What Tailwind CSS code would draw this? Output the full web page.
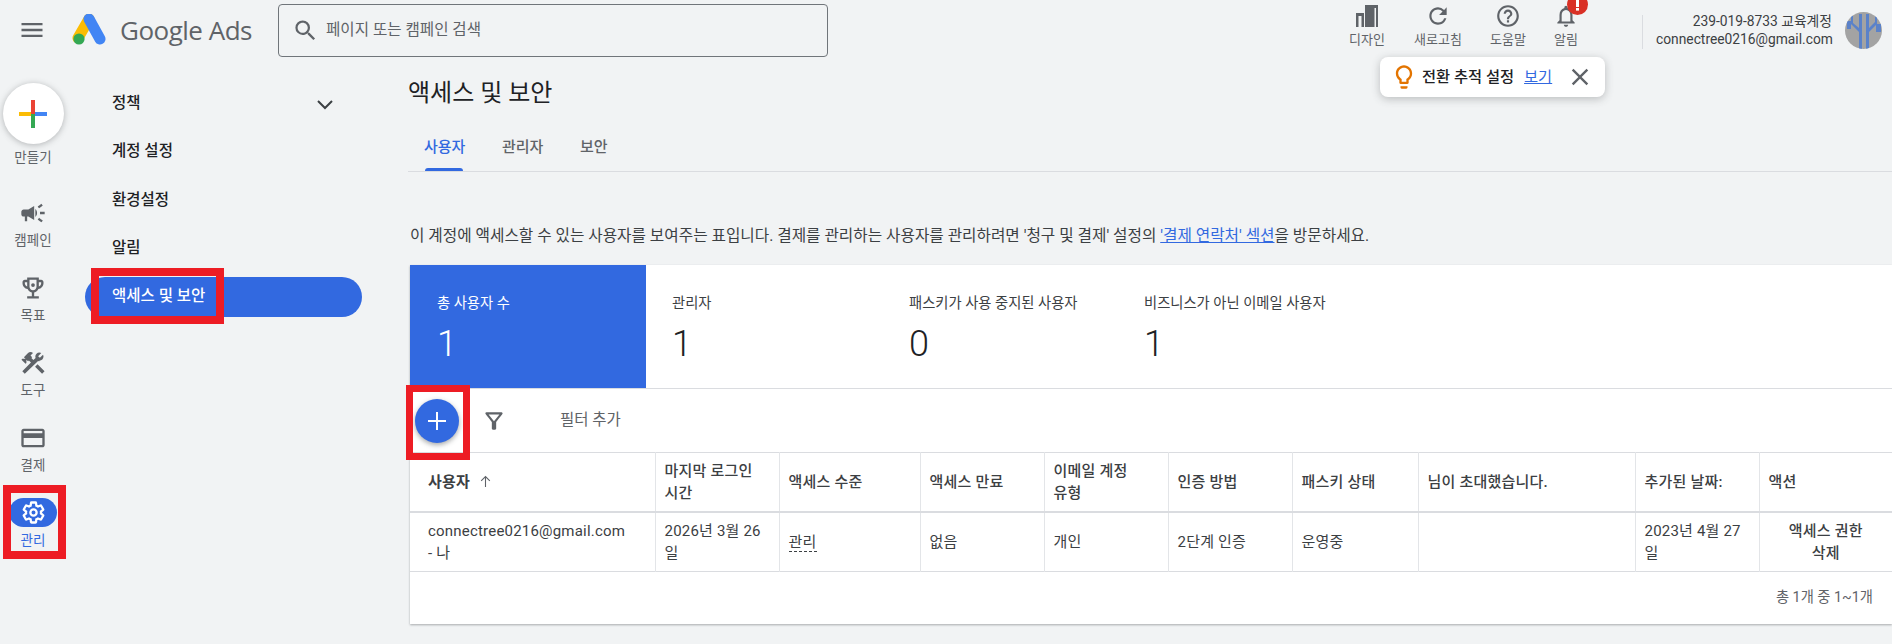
<!DOCTYPE html>
<html lang="ko">
<head>
    <meta charset="UTF-8">
    <title>액세스 및 보안 - Google Ads</title>
    <script src="https://cdn.jsdelivr.net/npm/@tailwindcss/browser@4"></script>
</head>
<body class="relative w-[1892px] h-[644px] overflow-hidden bg-[#f1f3f4] text-[#3c4043] font-['Roboto','Noto_Sans_CJK_KR',sans-serif]">

    <!-- 상단 바 -->
    <header class="flex items-start h-[60px]">
        <button class="w-[64px] h-[60px] flex items-center justify-center">
            <svg class="w-7 h-7 fill-[#5f6368]" viewBox="0 0 24 24"><path d="M3 18h18v-2H3v2zm0-5h18v-2H3v2zm0-7v2h18V6H3z"/></svg>
        </button>
        <svg class="w-[36px] h-[32px] mt-[14px] ml-[8px]" viewBox="0 0 36 32">
            <path d="M17 5 6 24" stroke="#fbbc04" stroke-width="11" stroke-linecap="round"/>
            <path d="M17 5 28 25" stroke="#4285f4" stroke-width="11" stroke-linecap="round"/>
            <circle cx="7" cy="25" r="5.6" fill="#34a853"/>
        </svg>
        <span class="ml-[12px] mt-[12px] w-[130px] whitespace-nowrap text-[26px] leading-[36px] text-[#5f6368] font-['Open_Sans',sans-serif] tracking-[-0.5px]">Google Ads</span>
        <div class="ml-[28px] mt-[4px] w-[550px] h-[53px] flex items-center border border-[#70757a] rounded-[4px] pl-[13px]">
            <svg class="w-[27px] h-[27px] fill-[#5f6368]" viewBox="0 0 24 24"><path d="M15.5 14h-.79l-.28-.27A6.471 6.471 0 0 0 16 9.5 6.5 6.5 0 1 0 9.5 16c1.61 0 3.09-.59 4.23-1.57l.27.28v.79l5 4.99L20.49 19l-4.99-5zm-6 0C7.01 14 5 11.99 5 9.5S7.01 5 9.5 5 14 7.01 14 9.5 11.99 14 9.5 14z"/></svg>
            <span class="ml-[7px] text-[15.6px] text-[#5f6368]">페이지 또는 캠페인 검색</span>
        </div>

        <div class="flex ml-auto text-[13px] text-[#5f6368]">
            <div class="w-[70px] flex flex-col items-center pt-[3px]">
                <svg class="w-[26px] h-[26px]" viewBox="0 0 26 26"><path d="M2 10h8v14H2zM11 2h13v22H11z" fill="#5f6368"/><path d="M4.5 13H7.5v11H4.5zM20.5 5H22v19h-1.5z" fill="#f1f3f4"/></svg>
                <span class="mt-[2px] leading-[18px]">디자인</span>
            </div>
            <div class="w-[72px] flex flex-col items-center pt-[3px]">
                <svg class="w-[26px] h-[26px] fill-[#5f6368]" viewBox="0 0 24 24"><path d="M17.65 6.35A7.958 7.958 0 0 0 12 4c-4.42 0-7.99 3.58-7.99 8s3.57 8 7.99 8c3.73 0 6.84-2.55 7.73-6h-2.08A5.99 5.99 0 0 1 12 18c-3.31 0-6-2.69-6-6s2.69-6 6-6c1.66 0 3.14.69 4.22 1.78L13 11h7V4l-2.35 2.35z"/></svg>
                <span class="mt-[2px] leading-[18px]">새로고침</span>
            </div>
            <div class="w-[68px] flex flex-col items-center pt-[3px]">
                <svg class="w-[26px] h-[26px] fill-[#5f6368]" viewBox="0 0 24 24"><path d="M11 18h2v-2h-2v2zm1-16C6.48 2 2 6.48 2 12s4.48 10 10 10 10-4.48 10-10S17.52 2 12 2zm0 18c-4.41 0-8-3.59-8-8s3.59-8 8-8 8 3.59 8 8-3.59 8-8 8zm0-14c-2.21 0-4 1.79-4 4h2c0-1.1.9-2 2-2s2 .9 2 2c0 2-3 1.75-3 5h2c0-2.25 3-2.5 3-5 0-2.21-1.79-4-4-4z"/></svg>
                <span class="mt-[2px] leading-[18px]">도움말</span>
            </div>
            <div class="relative w-[48px] flex flex-col items-center pt-[3px]">
                <svg class="w-[26px] h-[26px] fill-[#5f6368]" viewBox="0 0 24 24"><path d="M12 22c1.1 0 2-.9 2-2h-4c0 1.1.9 2 2 2zm6-6v-5c0-3.07-1.63-5.64-4.5-6.32V4c0-.83-.67-1.5-1.5-1.5s-1.5.67-1.5 1.5v.68C7.64 5.36 6 7.92 6 11v5l-2 2v1h16v-1l-2-2zm-2 1H8v-6c0-2.48 1.51-4.5 4-4.5s4 2.02 4 4.5v6z"/></svg>
                <span class="mt-[2px] leading-[18px]">알림</span>
                <svg class="absolute left-[25px] top-[-6px] w-[21px] h-[21px]" viewBox="0 0 21 21"><circle cx="10.5" cy="10.5" r="10.5" fill="#d93025"/><rect x="9" y="6" width="3" height="7" fill="#fff"/><rect x="9" y="14" width="3" height="2.6" fill="#fff"/></svg>
            </div>
        </div>
        <div class="ml-[52px] mt-[15px] w-px h-[34px] bg-[#dadce0]"></div>
        <div class="ml-[13px] mt-[12px] w-[176px] whitespace-nowrap text-[13.8px] leading-[18px] text-right text-[#3c4043]">
            <div>239-019-8733 교육계정</div>
            <div>connectree0216@gmail.com</div>
        </div>
        <svg class="ml-[13px] mr-[10px] mt-[12px] w-[37px] h-[37px]" viewBox="0 0 37 37">
            <clipPath id="av"><circle cx="18.5" cy="18.5" r="18.5"/></clipPath>
            <g clip-path="url(#av)">
                <rect width="37" height="37" fill="#a3a3a3"/>
                <path d="M14 37V20L6 12V4h2v7l6 5V2h3v37h4V2h3v14l6-6V3h2v9l-8 8v17z" fill="#5b82c9"/>
                <path d="M2 9h4v8H2zM31 12h5v8h-5z" fill="#5b82c9"/>
            </g>
        </svg>
    </header>

    <div class="flex h-[584px]">
        <!-- 왼쪽 레일 -->
        <nav class="w-[66px] shrink-0 flex flex-col items-center text-[13.5px] leading-[18px] text-[#5f6368]">
            <div class="mt-[23px] w-[61px] h-[61px] rounded-full bg-white shadow-[0_1px_6px_rgba(60,64,67,0.35)] flex items-center justify-center">
                <svg class="w-[28px] h-[28px]" viewBox="0 0 28 28">
                    <rect x="0" y="12" width="14" height="4" fill="#fbbc04"/>
                    <rect x="14" y="12" width="14" height="4" fill="#4285f4"/>
                    <rect x="12" y="14" width="4" height="14" fill="#34a853"/>
                    <rect x="12" y="0" width="4" height="14" fill="#ea4335"/>
                </svg>
            </div>
            <span class="mt-[4px] mb-[33px]">만들기</span>
            <div class="h-[75px] flex flex-col items-center gap-[4px]">
                <svg class="w-[28px] h-[28px] fill-[#5f6368]" viewBox="0 0 24 24"><path d="M18 11v2h4v-2h-4zm-2 6.61c.96.71 2.21 1.65 3.2 2.39.4-.53.8-1.07 1.2-1.6-.99-.74-2.24-1.68-3.2-2.4-.4.54-.8 1.08-1.2 1.61zM20.4 5.6c-.4-.53-.8-1.07-1.2-1.6-.99.74-2.24 1.68-3.2 2.4.4.53.8 1.07 1.2 1.6.96-.72 2.21-1.65 3.2-2.4zM4 9c-1.1 0-2 .9-2 2v2c0 1.1.9 2 2 2h1v4h2v-4h1l5 3V6L8 9H4zm11.5 3c0-1.33-.58-2.53-1.5-3.35v6.69c.92-.81 1.5-2.01 1.5-3.34z"/></svg>
                <span>캠페인</span>
            </div>
            <div class="h-[75px] flex flex-col items-center gap-[4px]">
                <svg class="w-[28px] h-[28px] fill-[#5f6368]" viewBox="0 0 24 24"><path d="M19 5h-2V3H7v2H5c-1.1 0-2 .9-2 2v1c0 2.55 1.92 4.63 4.39 4.94.63 1.5 1.98 2.63 3.61 2.96V19H7v2h10v-2h-4v-3.1c1.63-.33 2.98-1.46 3.61-2.96C19.08 12.63 21 10.55 21 8V7c0-1.1-.9-2-2-2zM5 8V7h2v3.82C5.84 10.4 5 9.3 5 8zm7 6c-1.65 0-3-1.35-3-3V5h6v6c0 1.65-1.35 3-3 3zm7-6c0 1.3-.84 2.4-2 2.82V7h2v1z"/><circle cx="12" cy="9.5" r="1.6"/></svg>
                <span>목표</span>
            </div>
            <div class="h-[75px] flex flex-col items-center gap-[4px]">
                <svg class="w-[28px] h-[28px] fill-[#5f6368]" viewBox="0 0 24 24"><path d="M13.78 15.3l6 6 2.11-2.16-6-6zM17.5 10c1.93 0 3.5-1.57 3.5-3.5 0-.58-.16-1.12-.41-1.6l-2.7 2.7-1.49-1.49 2.7-2.7c-.48-.25-1.02-.41-1.6-.41C15.57 3 14 4.57 14 6.5c0 .41.08.8.21 1.16l-1.85 1.85-1.78-1.78.71-.71-1.41-1.41L12 3.49c-1.17-1.17-3.07-1.17-4.24 0L4.22 7.03l1.41 1.41H2.81l-.71.71 3.54 3.54.71-.71V9.15l1.41 1.41.71-.71 1.78 1.78-7.41 7.41 2.12 2.12L16.34 10.3c.36.13.75.21 1.16.21z"/></svg>
                <span>도구</span>
            </div>
            <div class="h-[74px] flex flex-col items-center gap-[4px]">
                <svg class="w-[28px] h-[28px] fill-[#5f6368]" viewBox="0 0 24 24"><path d="M20 4H4c-1.11 0-1.99.89-1.99 2L2 18c0 1.11.89 2 2 2h16c1.11 0 2-.89 2-2V6c0-1.11-.89-2-2-2zm0 14H4v-6h16v6zm0-10H4V6h16v2z"/></svg>
                <span>결제</span>
            </div>
            <div class="w-[48px] h-[29px] rounded-full bg-[#3269e0] flex items-center justify-center">
                <svg class="w-[25px] h-[25px]" viewBox="0 0 24 24" fill="none" stroke="#fff" stroke-width="2.2"><path d="M19.14 12.94c.04-.3.06-.61.06-.94 0-.32-.02-.64-.07-.94l2.03-1.58c.18-.14.23-.41.12-.61l-1.92-3.32c-.12-.22-.37-.29-.59-.22l-2.39.96c-.5-.38-1.03-.7-1.62-.94l-.36-2.54c-.04-.24-.24-.41-.48-.41h-3.84c-.24 0-.43.17-.47.41l-.36 2.54c-.59.24-1.13.57-1.62.94l-2.39-.96c-.22-.08-.47 0-.59.22L2.74 8.87c-.12.21-.08.47.12.61l2.03 1.58c-.05.3-.09.63-.09.94s.02.64.07.94l-2.03 1.58c-.18.14-.23.41-.12.61l1.92 3.32c.12.22.37.29.59.22l2.39-.96c.5.38 1.03.7 1.62.94l.36 2.54c.05.24.24.41.48.41h3.84c.24 0 .44-.17.47-.41l.36-2.54c.59-.24 1.13-.56 1.62-.94l2.39.96c.22.08.47 0 .59-.22l1.92-3.32c.12-.22.07-.47-.12-.61l-2.01-1.58z"/><circle cx="12" cy="12" r="3"/></svg>
            </div>
            <span class="mt-[4px] text-[#3269e0]">관리</span>
        </nav>

        <!-- 설정 메뉴 -->
        <nav class="w-[342px] shrink-0 pl-[19px] pt-[20px] pr-[46px] text-[15.5px] font-medium text-[#202124]">
            <div class="flex items-center justify-between h-[47px] pl-[27px] pr-[25px]">
                <span>정책</span>
                <svg class="w-[24px] h-[24px]" viewBox="0 0 24 24" fill="none" stroke="#3c4043" stroke-width="2"><path d="M5 9l7 7 7-7"/></svg>
            </div>
            <div class="flex items-center h-[49px] pl-[27px]">계정 설정</div>
            <div class="flex items-center h-[49px] pl-[27px]">환경설정</div>
            <div class="flex items-center h-[47px] pl-[27px]">알림</div>
            <div class="flex items-center h-[40px] mt-[5px] pl-[27px] rounded-full bg-[#3269e0] text-white">액세스 및 보안</div>
        </nav>

        <!-- 본문 -->
        <main class="flex-1 min-w-0">
            <h1 class="mt-[17px] h-[32px] text-[24px] leading-[32px] font-normal text-[#202124]">액세스 및 보안</h1>
            <div class="mt-[17px] h-[46px] flex border-b border-[#dadce0] text-[15px] font-medium text-[#5f6368]">
                <div class="relative w-[78px] pl-[16px] pt-[10px] text-[#3269e0]">
                    사용자
                    <span class="absolute left-[17px] bottom-0 w-[38px] h-[3px] rounded-t bg-[#3269e0]"></span>
                </div>
                <div class="w-[78px] pl-[16px] pt-[10px]">관리자</div>
                <div class="w-[78px] pl-[16px] pt-[10px]">보안</div>
            </div>
            <p class="mt-[54px] ml-[2px] whitespace-nowrap text-[15.7px] leading-[20px] text-[#3c4043]">이 계정에 액세스할 수 있는 사용자를 보여주는 표입니다. 결제를 관리하는 사용자를 관리하려면 '청구 및 결제' 설정의 <a class="text-[#3269e0] underline">'결제 연락처' 섹션</a>을 방문하세요.</p>

            <div class="mt-[19px] ml-[2px] bg-white shadow-[0_1px_2px_rgba(60,64,67,0.4)] h-[359px]">
                <!-- 통계 -->
                <div class="flex h-[124px] border-b border-[#dadce0] text-[14.3px]">
                    <div class="w-[236px] bg-[#3269e0] text-white pl-[27px] pt-[28px]">
                        <div class="leading-[20px]">총 사용자 수</div>
                        <div class="mt-[9px] text-[36px] font-light leading-[44px]">1</div>
                    </div>
                    <div class="w-[236px] pl-[26px] pt-[28px] text-[#3c4043]">
                        <div class="leading-[20px]">관리자</div>
                        <div class="mt-[9px] text-[36px] font-light leading-[44px] text-[#202124]">1</div>
                    </div>
                    <div class="w-[235px] pl-[27px] pt-[28px] text-[#3c4043]">
                        <div class="leading-[20px]">패스키가 사용 중지된 사용자</div>
                        <div class="mt-[9px] text-[36px] font-light leading-[44px] text-[#202124]">0</div>
                    </div>
                    <div class="pl-[27px] pt-[28px] text-[#3c4043]">
                        <div class="leading-[20px]">비즈니스가 아닌 이메일 사용자</div>
                        <div class="mt-[9px] text-[36px] font-light leading-[44px] text-[#202124]">1</div>
                    </div>
                </div>
                <!-- 도구 모음 -->
                <div class="flex items-center h-[63px] pl-[5px] text-[#5f6368]">
                    <button class="w-[44px] h-[44px] rounded-full bg-[#3269e0] shadow-[0_2px_5px_rgba(60,64,67,0.45)] flex items-center justify-center">
                        <svg class="w-[24px] h-[24px]" viewBox="0 0 24 24" stroke="#fff" stroke-width="2"><path d="M12 3v18M3 12h18"/></svg>
                    </button>
                    <svg class="ml-[22px] w-[26px] h-[26px] fill-[#5f6368]" viewBox="0 0 24 24"><path d="M7 6h10l-5.01 6.3L7 6zm-2.75-.39C6.27 8.2 10 13 10 13v6c0 .55.45 1 1 1h2c.55 0 1-.45 1-1v-6s3.72-4.8 5.74-7.39A.998.998 0 0 0 18.95 4H5.04c-.83 0-1.3.95-.79 1.61z"/></svg>
                    <span class="ml-[53px] text-[15.5px]">필터 추가</span>
                </div>
                <!-- 사용자 표 -->
                <table class="w-full table-fixed border-collapse text-[15px] leading-[22px] tracking-[0.2px] text-[#3c4043]">
                    <colgroup>
                        <col class="w-[245px]"><col class="w-[124px]"><col class="w-[141px]"><col class="w-[124px]"><col class="w-[124px]"><col class="w-[124px]"><col class="w-[126px]"><col class="w-[217px]"><col class="w-[124px]"><col>
                    </colgroup>
                    <thead>
                        <tr class="h-[59px] border-t border-t-[#dadce0] border-b-2 border-b-[#dadce0] text-left">
                            <th class="pl-[18px] pr-2 font-bold"><span class="inline-flex items-center gap-[9px]">사용자 <svg class="w-[13px] h-[13px]" viewBox="0 0 12 12" fill="none" stroke="#5f6368" stroke-width="1"><path d="M6 11V1.5M2 5.5l4-4 4 4"/></svg></span></th>
                            <th class="border-l border-[#e3e5e8] px-[9px] font-medium">마지막 로그인 시간</th>
                            <th class="border-l border-[#e3e5e8] px-[9px] font-medium">액세스 수준</th>
                            <th class="border-l border-[#e3e5e8] px-[9px] font-medium">액세스 만료</th>
                            <th class="border-l border-[#e3e5e8] px-[9px] font-medium">이메일 계정<br>유형</th>
                            <th class="border-l border-[#e3e5e8] px-[9px] font-medium">인증 방법</th>
                            <th class="border-l border-[#e3e5e8] px-[9px] font-medium">패스키 상태</th>
                            <th class="border-l border-[#e3e5e8] px-[9px] font-medium">님이 초대했습니다.</th>
                            <th class="border-l border-[#e3e5e8] px-[9px] font-medium">추가된 날짜:</th>
                            <th class="border-l border-[#e3e5e8] px-[9px] font-medium">액션</th>
                        </tr>
                    </thead>
                    <tbody>
                        <tr class="h-[60px] border-b border-[#dadce0]">
                            <td class="pl-[18px] pr-[12px]">connectree0216@gmail.com<br>- 나</td>
                            <td class="border-l border-[#e3e5e8] px-[9px]">2026년 3월 26일</td>
                            <td class="border-l border-[#e3e5e8] px-[9px]"><span class="border-b border-dashed border-[#3c4043] leading-[18px] inline-block">관리</span></td>
                            <td class="border-l border-[#e3e5e8] px-[9px]">없음</td>
                            <td class="border-l border-[#e3e5e8] px-[9px]">개인</td>
                            <td class="border-l border-[#e3e5e8] px-[9px]">2단계 인증</td>
                            <td class="border-l border-[#e3e5e8] px-[9px]">운영중</td>
                            <td class="border-l border-[#e3e5e8] px-[9px]"></td>
                            <td class="border-l border-[#e3e5e8] px-[9px]">2023년 4월 27일</td>
                            <td class="border-l border-[#e3e5e8] px-[9px] text-center font-medium">액세스 권한<br>삭제</td>
                        </tr>
                    </tbody>
                </table>
                <div class="h-[52px] flex items-center justify-end pr-[19px] text-[14.3px] text-[#5f6368]">총 1개 중 1~1개</div>
            </div>
        </main>
    </div>

    <!-- 알림 말풍선 -->
    <div class="absolute left-[1380px] top-[57px] w-[225px] h-[40px] flex items-center bg-white rounded-[8px] shadow-[0_2px_8px_rgba(60,64,67,0.3)] pl-[10px] text-[15.3px] font-medium text-[#202124]">
        <svg class="w-[28px] h-[28px] fill-[#e37400]" viewBox="0 0 24 24"><path d="M9 21c0 .55.45 1 1 1h4c.55 0 1-.45 1-1v-1H9v1zm3-19C8.14 2 5 5.14 5 9c0 2.38 1.19 4.47 3 5.74V17c0 .55.45 1 1 1h6c.55 0 1-.45 1-1v-2.26c1.81-1.27 3-3.36 3-5.74 0-3.86-3.14-7-7-7zm2.85 11.1l-.85.6V16h-4v-2.3l-.85-.6A4.997 4.997 0 0 1 7 9c0-2.76 2.24-5 5-5s5 2.24 5 5c0 1.63-.8 3.16-2.15 4.1z"/></svg>
        <span class="ml-[4px]">전환 추적 설정</span>
        <a class="ml-[10px] font-normal text-[#3269e0] underline">보기</a>
        <svg class="ml-[14px] w-[28px] h-[28px] fill-[#5f6368]" viewBox="0 0 24 24"><path d="M19 6.41 17.59 5 12 10.59 6.41 5 5 6.41 10.59 12 5 17.59 6.41 19 12 13.41 17.59 19 19 17.59 13.41 12z"/></svg>
    </div>

    <!-- 빨간 강조 상자 -->
    <div class="absolute left-[3px] top-[485px] w-[63px] h-[74px] border-[8px] border-[#ed1c24]"></div>
    <div class="absolute left-[91px] top-[268px] w-[133px] h-[56px] border-[8px] border-[#ed1c24]"></div>
    <div class="absolute left-[406px] top-[385px] w-[64px] h-[75px] border-[7px] border-[#ed1c24]"></div>
</body>
</html>
